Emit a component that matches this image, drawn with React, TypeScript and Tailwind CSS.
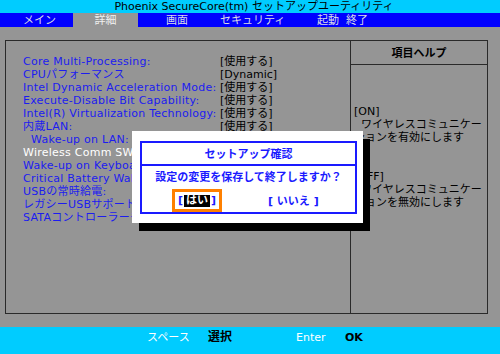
const font = { fontFamily: '"DejaVu Sans", "Noto Sans CJK JP", sans-serif' };

// values under the dialog are hidden in the screenshot, so they are left blank
const rows: { label: string; value: string; indent?: boolean; selected?: boolean }[] = [
  { label: 'Core Multi-Processing:', value: '[使用する]' },
  { label: 'CPUパフォーマンス', value: '[Dynamic]' },
  { label: 'Intel Dynamic Acceleration Mode:', value: '[使用する]' },
  { label: 'Execute-Disable Bit Capability:', value: '[使用する]' },
  { label: 'Intel(R) Virtualization Technology:', value: '[使用する]' },
  { label: '内蔵LAN:', value: '[使用する]' },
  { label: 'Wake-up on LAN:', value: '', indent: true },
  { label: 'Wireless Comm SW:', value: '', selected: true },
  { label: 'Wake-up on Keyboard:', value: '' },
  { label: 'Critical Battery Wake-up:', value: '' },
  { label: 'USBの常時給電:', value: '' },
  { label: 'レガシーUSBサポート:', value: '' },
  { label: 'SATAコントローラーモード:', value: '' },
];

export default function App() {
  return (
    <div className="relative flex h-[354px] w-[500px] flex-col overflow-hidden bg-[#959595] text-[11px] leading-[13px]" style={font}>
      {/* title */}
      <div className="flex h-[13px] items-center justify-center bg-[#00ccff] pl-[8px] text-black">
        Phoenix SecureCore(tm) セットアップユーティリティ
      </div>

      {/* menu */}
      <div className="flex h-[14px] items-center whitespace-nowrap bg-[#0000ff] text-[#dcdce6]">
        <span className="w-[73px] pl-[23px]">メイン</span>
        <span className="flex h-full w-[65px] items-center justify-center bg-[#959595] text-[#f0f0f0]">詳細</span>
        <span className="w-[82px] pl-[28px]">画面</span>
        <span className="w-[97px]">セキュリティ</span>
        <span className="w-[29px]">起動</span>
        <span>終了</span>
      </div>

      {/* body */}
      <div className="flex-1 pl-[5px] pt-[13px]">
        <div className="flex h-[274px] w-[483px] border border-[#2a2a2a]">
          <div className="w-[344px] pl-[17px] pt-[14px]">
            {rows.map((r) => (
              <div key={r.label} className="grid h-[13px] grid-cols-[197px_1fr] whitespace-nowrap">
                <span className={`tracking-[0.25px] ${r.indent ? 'pl-[8px]' : ''} ${r.selected ? 'text-white' : 'text-[#1c1cf0]'}`}>{r.label}</span>
                <span className="text-black">{r.value}</span>
              </div>
            ))}
          </div>
          <div className="flex flex-1 flex-col border-l border-[#2a2a2a]">
            <div className="flex h-[24px] items-center justify-center border-b border-[#2a2a2a] pt-[1px] font-bold text-black">
              項目ヘルプ
            </div>
            <div className="whitespace-nowrap pl-[3px] pt-[40px] text-black">
              <div className="h-[13px]">[ON]</div>
              <div className="h-[13px] pl-[7px]">ワイヤレスコミュニケー</div>
              <div className="h-[13px]">ションを有効にします</div>
              <div className="h-[26px]" />
              <div className="h-[13px]">[OFF]</div>
              <div className="h-[13px] pl-[7px]">ワイヤレスコミュニケー</div>
              <div className="h-[13px]">ションを無効にします</div>
            </div>
          </div>
        </div>
      </div>

      {/* footer */}
      <div className="flex h-[27px] items-start whitespace-nowrap bg-[#00ccff] pl-[147px] pt-[4px]">
        <span className="w-[61px] text-white">スペース</span>
        <span className="w-[88px] text-[12px] font-bold text-black">選択</span>
        <span className="w-[49px] text-white">Enter</span>
        <span className="font-bold text-black">OK</span>
      </div>

      {/* confirm dialog */}
      <div className="absolute left-[132px] top-[131px] flex h-[92px] w-[231px] flex-col bg-white pb-[10px] pl-[8px] pr-[6px] pt-[10px] shadow-[7px_8px_0_#000]">
        <div className="flex flex-1 flex-col whitespace-nowrap border-2 border-[#1a1aff] font-bold text-[#1a1aff]">
          <div className="flex h-[23px] items-center justify-center border-b-2 border-[#1a1aff] pt-[2px]">
            セットアップ確認
          </div>
          <div className="mt-[5px] h-[13px] text-center">設定の変更を保存して終了しますか？</div>
          <div className="mt-[5px] flex h-[23px] items-center pl-[30px]">
            <div className="flex h-[23px] w-[50px] shrink-0 items-center justify-center border-[3px] border-[#ff8000]">
              <span>[</span>
              <span className="ml-[1px] h-[12px] bg-black px-[2px] leading-[12px] text-white">はい</span>
              <span className="ml-[1px]">]</span>
            </div>
            <div className="ml-[46px] pt-[1px]">[ いいえ ]</div>
          </div>
        </div>
      </div>
    </div>
  );
}
